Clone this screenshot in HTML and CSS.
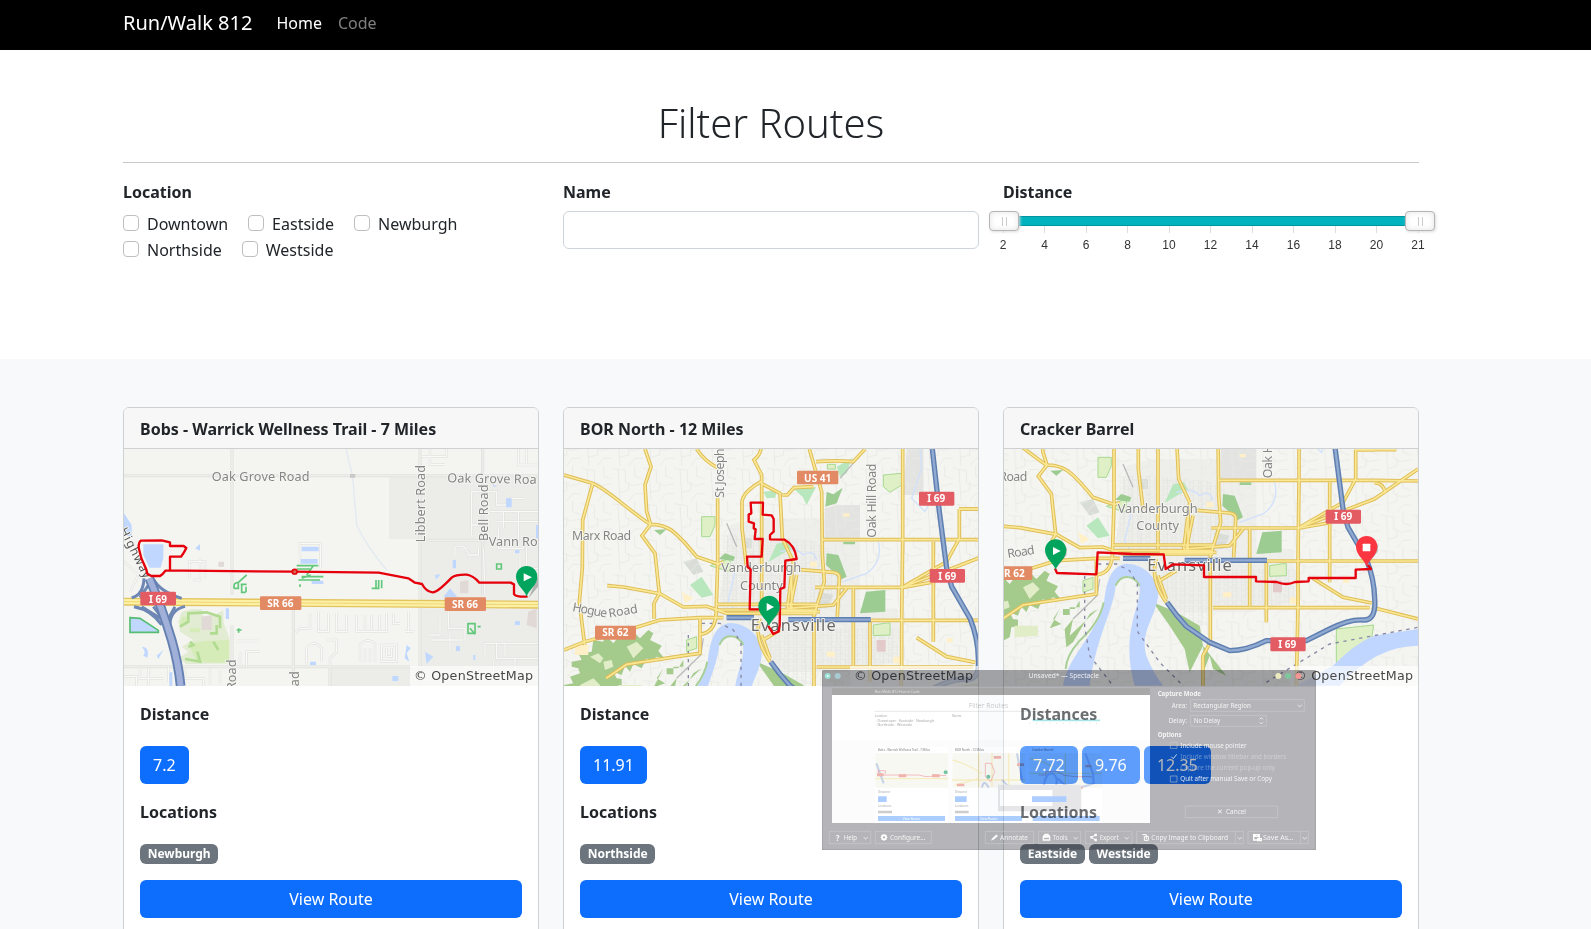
FILE: index.html
```html
<!DOCTYPE html>
<html lang="en">
<head>
<meta charset="utf-8">
<title>Run/Walk 812</title>
<link rel="stylesheet" href="styles.css">
</head>
<body>
<nav class="navbar"><a class="brand">Run/Walk 812</a><a class="nav-link active">Home</a><a class="nav-link">Code</a></nav>

<svg class="defs" width="0" height="0">
  <defs>
    <pattern id="grid" width="26" height="18" patternUnits="userSpaceOnUse"><path d="M0 0H26M0 0V18M13 0V18M0 9H13" stroke="#dcdcd9" stroke-width="1.4" fill="none"/></pattern>
    <pattern id="grid2" width="93" height="106" patternUnits="userSpaceOnUse"><path d="M0 8L40 14V50L62 60L93 54M18 11L24 106M68 0V32L93 40M24 80L50 74V50M50 106L68 84H93" stroke="#e8e8e4" stroke-width="2.5" fill="none"/></pattern>
    <g id="pin"><path d="M0 0C-5-20-32-34-32-60A32 32 0 0 1 32-60C32-34 5-20 0 0Z"/></g>
    <g id="roads">
      <path d="M42 240L125 264C170 280 215 330 300 388C350 388 370 400 440 485L505 507L520 500"/>
      <path d="M128 266L98 375L97 520L88 620L104 750M42 765L105 740L200 715L330 675L450 668L520 668"/>
      <path d="M285 162L303 215L285 270L290 350L302 388L276 422L315 475L328 595L312 625V672"/>
      <path d="M172 572L220 576L330 596L400 636L470 634L530 655H800"/>
      <path d="M503 310V507L498 660C495 700 475 715 450 718"/>
      <path d="M440 162Q465 200 503 218"/>
      <path d="M633 162Q630 180 612 195L635 240V640M633 260Q580 290 576 320V400L590 520M633 265L690 295L697 430L730 500L712 640"/>
      <path d="M697 300H712L732 278L790 275M798 200Q860 195 910 200L945 162"/>
      <path d="M778 162L815 290L817 480L823 560L792 660V872"/>
      <path d="M817 434H1284L1415 436M1058 162V440L1055 675V810L1050 1050"/>
      <path d="M752 524L850 532Q870 535 868 550L862 665M795 577H1060L1155 560M712 640L850 630L890 580"/>
      <path d="M500 628H800M500 645H800M640 650L760 650L810 650"/>
      <path d="M960 676H1415M910 580V812M1150 440V740M960 680V860M1228 342H1284M1228 342V430L1190 500L1060 575L1180 530L1284 490L1415 400"/>
      <path d="M450 670V775L400 782L230 808L168 850M635 720L660 790M800 816H1270M1100 728L1190 785L1276 802M1276 815L1415 850"/>
      <path d="M792 870V920L770 960V1050M630 670Q610 730 660 800M640 735L690 705"/>
      <path d="M1284 442Q1310 440 1317 472M1228 342H1350"/>
      <path d="M725 520V650M740 540L720 640"/>
    </g>
    <g id="mways">
      <path d="M1147 162L1168 350L1190 520L1205 575L1260 670Q1284 730 1285 790Q1290 855 1250 853Q1210 850 1150 880L1080 915H960Q900 945 850 945L790 920L720 872Q690 840 662 800"/>
      <path d="M530 668H612M715 674H962"/>
    </g>
    <g id="city">
      <rect x="20" y="140" width="1420" height="930" fill="#f4f5f0"/>
      <path d="M540 390L620 370H900L930 450V640H1040V800L900 830H680L640 760L500 680Z" fill="#eeeeeb"/>
      <path d="M824 340L860 330H930V430H824ZM1070 162H1120V300H1060Z" fill="#e3e3e1"/>
      <path d="M580 430H605V460H580ZM400 500L440 490L460 530L430 540ZM805 590L850 600L830 640H800Z" fill="#d9ddd8"/>
      <rect x="42" y="140" width="1400" height="930" fill="url(#grid2)"/>
      <path d="M650 700H1060V810H800V870H720L650 790ZM510 420H620L800 440L880 500V640H510Z" fill="url(#grid)"/>
      <g fill="#b9e7bd"><path d="M732 282L798 276L770 330L758 306ZM680 446L712 440L726 462L700 475L655 502ZM420 570L455 545L490 600L455 608ZM640 290L680 286L676 308L650 310ZM860 215L905 190L890 235L870 245Z"/></g>
      <g fill="#dff0c6" stroke="#a7d991" stroke-width="3"><path d="M455 365H495V390L480 425H455ZM1000 240L1055 235V270L1020 292L1000 275ZM1010 684H1020V720L970 722V690ZM480 512L540 490V530ZM1170 880L1282 868L1270 950L1170 980ZM832 208H856V222H832ZM410 735L440 725V760L410 770Z"/></g>
      <g fill="#9dcc93"><path d="M830 475L865 480L890 545L870 555L850 530L828 510ZM506 492L525 475L555 485L550 498ZM948 590L1006 585V650L930 655ZM312 405L350 403L330 420ZM880 440H915V448H880ZM830 290L850 298L878 278L860 325L826 335Z"/></g>
      <path d="M65 800L95 795L85 775L125 770L130 735L160 740L165 720L190 745L210 720L235 730L255 715L270 730L295 705L310 715L300 735L335 752L325 768L345 792L320 785L300 800L290 790L275 820L250 808L240 830L225 812L215 840L190 830L200 850L215 852V872L195 875L190 905L160 920L150 960L130 965V1050H42V870L70 865L60 845L90 835L85 820L65 815ZM340 820L320 850L345 865L310 878L325 850ZM400 795V815H370V838H350V820H385ZM620 800L690 830L760 870L770 930L730 1010L715 940L670 870ZM770 930L840 1020L800 1000L790 960L775 1000ZM455 820L430 835L380 920L360 935L355 880L380 850L370 900Z" fill="#a4ca8c"/>
      <path d="M120 785L145 775L160 790L150 805ZM230 755L260 740L280 760L250 790ZM90 870L130 850L150 870L145 900L110 910ZM205 870H275V900L205 905ZM160 800L185 795L190 815L165 825Z" fill="#e0edc6"/>
      <path d="M350 1050C365 960 455 890 473 800C480 745 490 690 540 684C590 684 640 725 635 785C625 850 580 890 600 960Q620 1010 650 1050H565C540 960 545 890 575 800C590 740 570 723 545 723Q520 720 508 750C500 830 450 900 430 1050ZM1160 990Q1230 920 1284 900L1415 880V930Q1290 930 1180 1050H1050Z" fill="#c0d6ff"/>
      <path d="M508 750Q520 722 545 724Q566 725 580 750M472 800Q460 860 400 915Q360 960 358 1000" fill="none" stroke="#a7cf97" stroke-width="6"/>
      <g fill="none" stroke="#d2e1fb" stroke-width="4"><path d="M1110 162L1115 220L1085 310L1125 350L1140 320M985 440Q1000 500 950 535L880 560M690 470Q740 455 760 480Q790 460 800 495M555 530L535 615L560 660"/></g>
      <path d="M415 720V872L430 960L500 1050M455 685H510L550 705L573 745V872L575 890L640 980L720 1060M960 1040L1150 925L1415 875" fill="none" stroke="#8688a4" stroke-width="4" stroke-dasharray="10 14"/>
      <path d="M530 385L560 455M460 730L452 780L380 850M940 170L870 250" fill="none" stroke="#b9b9b9" stroke-width="4"/>
      <g fill="#fff0c8"><path d="M75 750H115V780H75ZM395 590L430 610L405 625ZM780 500H800V515H780ZM830 770H855V785H830ZM1030 785H1050V805H1030ZM1190 730H1208V742H1190ZM880 355H898V365H880Z"/></g>
      <path d="M980 735H1007V770H980Z" fill="#e3caca"/>
      <use href="#roads" class="road-edge"/><use href="#roads" class="road"/>
      <use href="#mways" class="mway-edge"/><use href="#mways" class="mway"/>
      <g class="place" text-anchor="middle"><text x="634" y="531" font-size="40" textLength="240" lengthAdjust="spacingAndGlyphs">Vanderburgh</text><text x="634" y="584" font-size="40" textLength="128" lengthAdjust="spacingAndGlyphs">County</text></g>
    </g>
  </defs>
</svg>

<section class="filters">
  <h1>Filter Routes</h1>
  <hr>
  <div class="columns">
    <div>
      <div class="label">Location</div>
      <div class="checks">
        <label><i></i>Downtown</label><label><i></i>Eastside</label><label><i></i>Newburgh</label>
        <label><i></i>Northside</label><label><i></i>Westside</label>
      </div>
    </div>
    <div><div class="label">Name</div><input class="name" type="text"></div>
    <div>
      <div class="label">Distance</div>
      <div class="slider"><span class="handle"><b></b><b></b></span><span class="bar"></span><span class="handle"><b></b><b></b></span></div>
      <div class="ticks"><span>2</span><span>4</span><span>6</span><span>8</span><span>10</span><span>12</span><span>14</span><span>16</span><span>18</span><span>20</span><span>21</span></div>
    </div>
  </div>
</section>

<main class="routes columns">
  <article class="card">
    <header>Bobs - Warrick Wellness Trail - 7 Miles</header>
    <svg class="map" viewBox="42 162 1242 711" preserveAspectRatio="none">
      <rect x="42" y="162" width="1242" height="711" fill="#f4f5f0"/>
      <path d="M837 243H1284V620H930V432H837ZM930 640H1284V873H660V815H930Z" fill="#ecece9"/>
      <g fill="none" stroke="#dededb" stroke-width="9"><path d="M42 242H1284M366 162V600M930 162V873M1118 162V600M930 436H1130M550 640V873M42 815H900M366 690V873M660 815V873"/></g>
      <g fill="none" stroke="#ededea" stroke-width="5"><path d="M42 242H1284M366 162V600M930 162V873M1118 162V600M930 436H1130M550 640V873M42 815H900M366 690V873M660 815V873"/></g>
      <path class="lane-edge" d="M935 185H1010V162M960 162V208H1005M1225 162V210H1284M1250 162V210M1085 420V290H1160V330H1200V310H1240M1140 350H1284M1160 380H1284M1165 400V460H1240V420M1225 350V440M1180 350V400M1230 480V520H1284M1250 455V540M1035 480V455Q1070 445 1075 480H1105V455M1085 390H1110M570 510V445H632V520M238 550V500H285V550M250 555H270V490M600 655V700H570L555 715M625 650V710H655V655M680 655V710H710V660M740 660V710H830V655M765 660V705M785 660V705M808 660V705M850 655V685H870M895 650V710M910 710H885M990 650V720H960M1015 650V700H1065V740M965 735H1060M1020 710V770M1130 745H1284M1125 790V745H1160V790H1284M1185 745V785M1215 790V850M1150 800V850M590 810V760Q610 730 635 760V800M650 735H680V770L660 790V810M750 800V750Q770 725 795 745V800M765 800V760M780 800V760M815 750H860V800H815ZM830 760V785H845V760M380 738H445M390 770V810M410 815V770H450M42 845H80V873M90 815V850H160M115 820V873M175 815V860M200 820V873M225 820V850H280V873M300 820V870M330 825V865M1120 460L1125 600M42 500L85 540L60 590"/>
      <path class="lane-core" d="M935 185H1010V162M960 162V208H1005M1225 162V210H1284M1250 162V210M1085 420V290H1160V330H1200V310H1240M1140 350H1284M1160 380H1284M1165 400V460H1240V420M1225 350V440M1180 350V400M1230 480V520H1284M1250 455V540M1035 480V455Q1070 445 1075 480H1105V455M1085 390H1110M570 510V445H632V520M238 550V500H285V550M250 555H270V490M600 655V700H570L555 715M625 650V710H655V655M680 655V710H710V660M740 660V710H830V655M765 660V705M785 660V705M808 660V705M850 655V685H870M895 650V710M910 710H885M990 650V720H960M1015 650V700H1065V740M965 735H1060M1020 710V770M1130 745H1284M1125 790V745H1160V790H1284M1185 745V785M1215 790V850M1150 800V850M590 810V760Q610 730 635 760V800M650 735H680V770L660 790V810M750 800V750Q770 725 795 745V800M765 800V760M780 800V760M815 750H860V800H815ZM830 760V785H845V760M380 738H445M390 770V810M410 815V770H450M42 845H80V873M90 815V850H160M115 820V873M175 815V860M200 820V873M225 820V850H280V873M300 820V870M330 825V865M1120 460L1125 600M42 500L85 540L60 590"/>
      <path d="M708 162L728 245L740 390Q770 455 830 525" fill="none" stroke="#e2e9f2" stroke-width="4"/>
      <path d="M720 237H736V248H720Z" fill="#c9c9c6"/>
      <g fill="#c0d8ff"><path d="M42 355L65 390V425L42 420ZM100 448H160V490L152 518H118L100 480ZM575 455H626V469H575ZM572 492H623V506H572ZM605 557H640V567H605ZM255 460L270 447V467ZM1188 310H1205V337H1188ZM1028 495H1038V520H1028ZM975 540L992 538L978 554ZM1000 606L1020 580L1042 606ZM945 770L970 785L950 806ZM95 755Q120 755 112 788L100 782Q110 770 95 755ZM140 782L160 765L145 792ZM890 750L902 760L890 775L898 800L884 790ZM847 843H865V858H847ZM600 800H618V810H600ZM178 832H187V873H178ZM1215 678H1230V690H1215ZM1038 753H1050V768H1038ZM1148 268L1162 275L1150 275ZM1278 390H1284V430H1278ZM347 640H357V672H347ZM1090 780H1096V795H1090ZM1215 465H1228V475H1215Z"/></g>
      <path d="M60 668L90 670L145 706V712H60Z" fill="#c0d8ff" stroke="#55bd72" stroke-width="5"/>
      <path d="M205 680L215 650L245 642H275L280 665L315 660L340 645V680L358 730V805L230 808L205 790L235 770L215 755L250 735L210 710Z" fill="#e2ecd2"/>
      <path d="M235 745L290 738L358 735V805L260 800ZM210 690L235 680V665L215 665ZM240 700H270V712H240Z" fill="#d5ecb8"/>
      <path d="M210 695L235 680L235 655L290 652L330 665V700M235 755L250 750L240 740M310 740L325 765M225 792L270 800L262 770M320 690V715H300" fill="none" stroke="#b0db91" stroke-width="8"/>
      <path d="M275 665L305 660V705H275ZM1050 560L1075 555V595H1050ZM325 500H342V515H325ZM1255 650L1280 640V700L1250 690Z" fill="#e0d9d6"/>
      <g fill="none" stroke="#61c77a" stroke-width="5"><path d="M560 512H625M560 522H600M575 545H640M565 555H630M590 540L610 512M575 550L602 540M570 568V576M372 580Q370 562 385 562L410 540M385 565V580H372M392 568H410M395 568V592H407M408 575V592M788 580H806V555M798 555V580M815 555V580M785 580H795M1074 686H1095V715H1074ZM1080 700L1095 718M1160 507H1174V522H1160ZM380 705H395M386 700V713M1103 695H1112"/></g>
      <path d="M42 620L1284 629" stroke="#e4c45d" stroke-width="24"/><path d="M42 620L1284 629" stroke="#fcf0a5" stroke-width="16"/><path d="M42 620L1284 629" stroke="#efd676" stroke-width="3"/>
      <g fill="none" stroke="#6e87b5" stroke-width="9"><path d="M65 608Q100 600 102 550M130 552Q150 590 215 610M72 635Q125 645 155 690M225 634Q180 645 180 690M90 608L122 560L150 605M130 635L165 680M95 635L160 675M195 635L170 680"/></g>
      <path d="M118 550Q155 635 185 735Q205 805 212 873" fill="none" stroke="#6480b2" stroke-width="29"/><path d="M118 550Q155 635 185 735Q205 805 212 873" fill="none" stroke="#a0b0d8" stroke-width="18"/>
      <g class="maptext" font-size="38"><text x="305" y="258" textLength="294">Oak Grove Road</text><text x="1012" y="262" textLength="268" transform="rotate(1 1012 262)">Oak Grove Roa</text><text x="1136" y="454" textLength="147">Vann Ro</text><text transform="translate(945 442)rotate(-90)" textLength="232">Libbert Road</text><text transform="translate(1133 438)rotate(-90)" textLength="170">Bell Road</text><text transform="translate(378 885)rotate(-90)">Road</text><text transform="translate(566 920)rotate(-90)">Road</text><text transform="translate(28 405)rotate(63)" textLength="165" class="hwy">Highway</text></g>
      <g class="shield"><rect x="91" y="590" width="107" height="41" rx="4" fill="#e35b63"/><rect x="450" y="604" width="124" height="41" rx="4" fill="#e28a63"/><rect x="1004" y="607" width="124" height="41" rx="4" fill="#e28a63"/><text x="144" y="623">I 69</text><text x="511" y="636">SR 66</text><text x="1065" y="639">SR 66</text></g>
      <path class="trail" d="M180 527V485H213Q223 472 229 459L221 453H180V442L155 436L93 437Q86 440 86 458L94 490L108 521L112 536L124 543H150L158 537L166 527H220L550 530L806 533L895 550L915 563L936 567Q948 590 968 592Q982 593 1025 548Q1038 538 1070 539Q1090 542 1108 563H1202L1212 568V597Q1216 606 1250 605"/><circle cx="554" cy="530" r="7" fill="#d36b5b" stroke="#e5000c" stroke-width="5"/>
      <path d="M1255 610L1284 575V545Z" fill="#777" opacity=".5"/><use href="#pin" x="1250" y="605" fill="#00a45c"/><path d="M1241 535L1266 547L1241 559Z" fill="#fff"/>
      <rect x="900" y="813" width="384" height="60" fill="#fff" opacity=".65"/><text class="osm" x="912" y="855" textLength="357">© OpenStreetMap</text>
    </svg>
    <div class="body"><strong>Distance</strong><p class="nums"><a class="btn">7.2</a></p><strong>Locations</strong><p class="tags"><span>Newburgh</span></p><a class="btn wide">View Route</a></div>
  </article>

  <article class="card">
    <header>BOR North - 12 Miles</header>
    <svg class="map" viewBox="42 162 1242 711" preserveAspectRatio="none">
      <use href="#city"/>
      <g class="maptext" font-size="37"><text x="66" y="435" textLength="177">Marx Road</text><text transform="translate(523 308)rotate(-90)" textLength="148">St Joseph</text><text transform="translate(977 428)rotate(-90)" textLength="222">Oak Hill Road</text><text transform="translate(66 648)rotate(11)" textLength="105">Hogue</text><text transform="translate(178 668)rotate(-10)" textLength="88">Road</text></g>
      <text class="big" x="602" y="707" textLength="255">Evansville</text>
      <g class="shield"><rect x="741" y="227" width="124" height="41" rx="4" fill="#e28a63"/><rect x="135" y="692" width="123" height="42" rx="4" fill="#e28a63"/><rect x="1107" y="290" width="106" height="42" rx="4" fill="#e35b63"/><rect x="1139" y="522" width="106" height="41" rx="4" fill="#e35b63"/><text x="803" y="260">US 41</text><text x="196" y="724">SR 62</text><text x="1159" y="322">I 69</text><text x="1192" y="554">I 69</text></g>
      <path class="trail" d="M655 643H599L602 523L593 516L591 485H635L638 432H614L617 403L611 400L612 385L596 380V359L604 355L602 323H639L638 359L665 361L671 372V410L660 420V433L704 434Q735 450 740 492L706 497L703 577L691 582L689 690L686 709L670 717L656 695"/>
      <path d="M658 690L690 650L692 625Z" fill="#777" opacity=".5"/><use href="#pin" x="657" y="694" fill="#00a45c"/><path d="M650 624L672 636L650 648Z" fill="#fff"/>
      <rect x="900" y="813" width="384" height="60" fill="#fff" opacity=".65"/><text class="osm" x="912" y="855" textLength="357">© OpenStreetMap</text>
    </svg>
    <div class="body"><strong>Distance</strong><p class="nums"><a class="btn">11.91</a></p><strong>Locations</strong><p class="tags"><span>Northside</span></p><a class="btn wide">View Route</a></div>
  </article>

  <article class="card">
    <header>Cracker Barrel</header>
    <svg class="map" viewBox="42 162 1242 711" preserveAspectRatio="none">
      <use href="#city" x="-131" y="-178"/>
      <g class="maptext" font-size="37"><text x="28" y="258" textLength="84">Road</text><text transform="translate(847 250)rotate(-90)" textLength="222">Oak Hill Road</text><text transform="translate(54 489)rotate(-9)" textLength="82">Road</text></g>
      <text class="big" x="472" y="529" textLength="253">Evansville</text>
      <g class="shield"><rect x="4" y="514" width="123" height="41" rx="4" fill="#e28a63"/><rect x="1007" y="344" width="106" height="42" rx="4" fill="#e35b63"/><rect x="841" y="727" width="106" height="42" rx="4" fill="#e35b63"/><text x="65" y="546">SR 62</text><text x="1060" y="376">I 69</text><text x="892" y="759">I 69</text></g>
      <path class="trail" d="M196 523L201 534L319 538L323 472L425 477L521 478L527 522L549 508L642 511V546H798V559L860 561Q890 573 915 561L956 559V549H1097V524L1143 522L1135 512"/>
      <path d="M197 521L229 481L231 456ZM1131 510L1163 470L1165 445Z" fill="#777" opacity=".5"/><use href="#pin" x="197" y="525" fill="#00a45c"/><path d="M189 456L212 468L189 480Z" fill="#fff"/><use href="#pin" x="1130" y="515" fill="#fb3640"/><rect x="1118" y="446" width="23" height="23" rx="2" fill="#fff"/>
      <rect x="900" y="813" width="384" height="60" fill="#fff" opacity=".65"/><text class="osm" x="912" y="855" textLength="357">© OpenStreetMap</text>
    </svg>
    <div class="body"><strong>Distances</strong><p class="nums"><a class="btn">7.72</a><a class="btn">9.76</a><a class="btn">12.35</a></p><strong>Locations</strong><p class="tags"><span>Eastside</span><span>Westside</span></p><a class="btn wide">View Route</a></div>
  </article>
</main>

<svg class="ghost" viewBox="0 0 1482 540">
  <path fill="#191924" fill-opacity=".32" fill-rule="evenodd" d="M5 0H1477Q1482 0 1482 5V540H0V5Q0 0 5 0ZM30 54V459H984V54Z"/>
  <path d="M0 50V5Q0 0 5 0H1477Q1482 0 1482 5V50Z" fill="#222" opacity=".1"/>
  <rect x="30" y="54" width="954" height="405" fill="#fff" opacity=".34"/>
  <rect x="30" y="54" width="954" height="21" fill="#000" opacity=".34"/>
  <path d="M0 539H1482M1480 0V540M1 0V540" stroke="#777" stroke-width="2" opacity=".4"/>
  <circle cx="17" cy="18" r="9" fill="#9de0d5"/><circle cx="17" cy="18" r="3" fill="#e5ffff"/><circle cx="47" cy="18" r="9" fill="#a7cbd0"/>
  <circle cx="1369" cy="18" r="9" fill="#eeeac0"/><circle cx="1398" cy="18" r="9" fill="#7fc69c"/><circle cx="1429" cy="18" r="9" fill="#f49694"/>
  <text x="158" y="68" font-size="12" fill="#ddd" textLength="135">Run/Walk 812 Home Code</text>
  <g class="mini-page">
    <rect x="30" y="210" width="954" height="249" fill="#fcfcfd"/>
    <path d="M160 232H378V459H160ZM391 232H609V459H391ZM622 232H840V459H622Z" fill="#fff"/>
    <text x="440" y="115" font-size="24" fill="#bbb" font-weight="300" textLength="119" lengthAdjust="spacingAndGlyphs">Filter Routes</text>
    <path d="M158 124H730" stroke="#ddd" stroke-width="2"/>
    <text x="158" y="142" font-size="10" textLength="37">Location</text><text x="390" y="142" font-size="10">Name</text>
    <text x="160" y="155" font-size="11" textLength="176">▫ Downtown ▫ Eastside ▫ Newburgh</text><text x="160" y="167" font-size="11" textLength="110">▫ Northside ▫ Westside</text>
    <text x="168" y="244" font-size="11" font-weight="bold" textLength="156" lengthAdjust="spacingAndGlyphs">Bobs - Warrick Wellness Trail - 7 Miles</text><text x="399" y="244" font-size="11" font-weight="bold" textLength="87" lengthAdjust="spacingAndGlyphs">BOR North - 12 Miles</text><text x="630" y="244" font-size="11" font-weight="bold" textLength="64" lengthAdjust="spacingAndGlyphs">Cracker Barrel</text>
    <text x="168" y="368" font-size="9">Distance</text><text x="399" y="368" font-size="9">Distance</text><text x="168" y="411" font-size="9">Locations</text><text x="399" y="411" font-size="9">Locations</text>
    <path d="M160 250H378V353H160ZM391 250H609V353H391ZM622 250H840V353H622Z" fill="#f8f8f3"/>
    <path d="M160 326H378M392 270Q430 280 480 310M470 250V350M510 250V350M560 250V350M390 330H610M400 345Q440 335 470 325M622 310H840M730 250V350M622 265Q660 270 690 290" fill="none" stroke="#f6edc3" stroke-width="4"/>
    <path d="M163 280L185 340M585 250L600 330M480 353Q485 325 500 353M540 330L560 350M665 350Q670 310 690 310Q712 320 700 352M708 325Q740 370 815 340L813 310L790 250" fill="none" stroke="#c6d2e6" stroke-width="6"/>
    <path d="M190 312V302H168L170 315H290Q325 325 335 315L372 317M490 320V280H508L518 305L506 335ZM650 315H672V305H708L726 316L760 320H810" fill="none" stroke="#f2a0a6" stroke-width="2"/>
    <path d="M230 313H253V322H230ZM330 313H353V322H330ZM165 310H185V319H165ZM515 258H537V266H515ZM585 280H606V288H585ZM405 341H427V349H405ZM790 285H808V292H790ZM760 350H782V357H760Z" fill="#f0b4ad"/>
    <circle cx="371" cy="307" r="6" fill="#73c5a5"/><circle cx="499" cy="320" r="6" fill="#73c5a5"/>
    <path d="M168 379H194V396H168ZM399 379H434V396H399ZM630 379H733V396H630ZM168 438H369V453H168ZM399 438H600V453H399ZM632 438H833V453H632Z" fill="#abcdff"/>
    <path d="M168 422H210V430H168ZM399 422H440V430H399Z" fill="#ccc"/>
    <path d="M528 344H778V424H528Z" fill="#e6e6e8"/><path d="M534 360H691V408H534Z" fill="#fff"/><path d="M630 379H733V396H630Z" fill="#abcdff"/>
    <path d="M632 151H834" stroke="#aae5e6" stroke-width="5"/><path d="M622 160H840" stroke="#ccc" stroke-width="2" stroke-dasharray="3 17"/>
  </g>
  <g font-size="10" fill="#fff" text-anchor="middle"><text x="268" y="449">View Route</text><text x="500" y="449">View Route</text></g>
  <g class="ghost-text">
    <text x="620" y="24" textLength="211" lengthAdjust="spacingAndGlyphs">Unsaved* — Spectacle</text>
    <text x="1007" y="77" font-weight="bold" textLength="130" lengthAdjust="spacingAndGlyphs">Capture Mode</text><text x="1049" y="115" textLength="46" lengthAdjust="spacingAndGlyphs">Area:</text><text x="1114" y="115" textLength="173" lengthAdjust="spacingAndGlyphs">Rectangular Region</text><text x="1040" y="160" textLength="55" lengthAdjust="spacingAndGlyphs">Delay:</text><text x="1115" y="160" textLength="80" lengthAdjust="spacingAndGlyphs">No Delay</text><text x="1007" y="202" font-weight="bold" textLength="72" lengthAdjust="spacingAndGlyphs">Options</text>
    <text x="1075" y="233" textLength="199" lengthAdjust="spacingAndGlyphs">Include mouse pointer</text><text x="1075" y="267" opacity=".4" textLength="318" lengthAdjust="spacingAndGlyphs">Include window titlebar and borders</text><text x="1075" y="301" opacity=".4" textLength="284" lengthAdjust="spacingAndGlyphs">Capture the current pop-up only</text><text x="1075" y="334" textLength="275" lengthAdjust="spacingAndGlyphs">Quit after manual Save or Copy</text>
    <text x="1186" y="433">✕</text><text x="1212" y="433" textLength="60" lengthAdjust="spacingAndGlyphs">Cancel</text>
    <text x="41" y="512" font-weight="bold" font-size="24">?</text><text x="65" y="511" textLength="40" lengthAdjust="spacingAndGlyphs">Help</text><text x="204" y="511" textLength="106" lengthAdjust="spacingAndGlyphs">Configure…</text><text x="534" y="511" textLength="84" lengthAdjust="spacingAndGlyphs">Annotate</text><text x="692" y="511" textLength="45" lengthAdjust="spacingAndGlyphs">Tools</text><text x="833" y="511" textLength="57" lengthAdjust="spacingAndGlyphs">Export</text><text x="988" y="511" textLength="230" lengthAdjust="spacingAndGlyphs">Copy Image to Clipboard</text><text x="1323" y="511" textLength="92" lengthAdjust="spacingAndGlyphs">Save As…</text>
  </g>
  <g class="ghost-line"><path d="M22 484H146V521H22ZM160 484H328V521H160ZM490 484H635V521H490ZM650 484H776V521H650ZM790 484H930V521H790ZM944 484H1264V521H944ZM1240 484V521M1278 484H1459V521H1278ZM1435 484V521M1106 89H1447V124H1106ZM1106 136H1333V169H1106ZM1090 408H1367V443H1090ZM1045 217H1065V235H1045ZM1045 318H1065V336H1045Z"/>
    <path class="sign" d="M125 502L131 507L137 502M755 502L761 507L767 502M908 502L914 507L920 502M1247 502L1253 507L1259 502M1442 502L1448 507L1454 502M1427 105L1433 110L1439 105M1313 148L1318 143L1323 148M1313 157L1318 162L1323 157M1048 260L1054 266L1064 253"/></g>
  <g fill="none" stroke="#fff"><circle cx="186" cy="502" r="6" stroke-width="5"/><path d="M186 492V496M186 508V512M176 502H180M192 502H196M179 495L182 498M190 506L193 509M179 509L182 506M190 498L193 495" stroke-width="4"/><path d="M508 511L512 504L523 494L527 498L516 508Z" fill="#fff"/><path d="M664 501H683V510H664ZM663 498H684M669 497V493H678V497" stroke-width="4"/><path d="M821 495L808 502L821 510" stroke-width="3"/><path d="M820 494H822V496H820ZM807 501H809V503H807ZM820 509H822V511H820Z" stroke-width="5"/><path d="M961 494H973V507M967 499H979V511H967Z" stroke-width="3"/><path d="M1295 494H1312V510H1295ZM1299 494V499H1308V494M1307 506H1318V512H1307Z" stroke-width="4"/></g>
</svg>
</body>
</html>
```

FILE: styles.css
```css
* { box-sizing: border-box; }
body { margin: 0; width: 1591px; height: 929px; overflow: hidden; position: relative; background: #fff; color: #212529; font: 16px/24px "Noto Sans", "Open Sans", sans-serif; }
.defs { position: absolute; }
.navbar { height: 50px; background: #000; padding: 0 0 4px 123px; display: flex; align-items: center; }
.brand { color: #fff; font-size: 20px; margin-right: 24px; }
.nav-link { color: #808080; margin-right: 16px; }
.nav-link.active { color: #fff; }
.filters { height: 309px; padding: 49px 172px 0 123px; }
h1 { margin: 0; font-size: 40px; line-height: 48px; font-weight: 300; text-align: center; }
hr { margin: 15px 0 17px; border: 0; border-top: 1px solid #c7c8c9; }
.columns { display: grid; grid-template-columns: repeat(3, 416px); gap: 24px; }
.label { font-weight: 700; margin-bottom: 7px; }
.checks { display: flex; flex-wrap: wrap; width: 380px; column-gap: 20px; row-gap: 2px; padding-top: 1px; }
.checks label { display: flex; gap: 8px; }
.checks i { width: 16px; height: 16px; border: 1px solid #bfbfbf; border-radius: 4px; margin-top: 3px; }
.name { display: block; width: 416px; height: 38px; border: 1px solid #ced4da; border-radius: 6px; }
.slider { display: flex; align-items: center; margin: 0 -16px 0 -14px; height: 20px; }
.bar { flex: 1; height: 10px; background: #00b3bf; border-top: 1px solid #00949e; border-bottom: 1px solid #00949e; }
.handle { width: 30px; height: 20px; border: 1px solid #b5b5b5; border-radius: 4px; background: #fff; box-shadow: inset 0 0 6px #e4e4e4, 1px 1px 3px #ddd; display: flex; align-items: center; justify-content: center; gap: 3px; position: relative; z-index: 1; }
.handle b { width: 1px; height: 9px; background: #ccc; }
.ticks { display: flex; justify-content: space-between; margin: -5px 1px 0 0; font: 12px/14px "Liberation Sans", Arial, sans-serif; color: #333; }
.ticks span { width: 0; display: flex; flex-direction: column; align-items: center; }
.ticks span::before { content: ""; width: 1px; height: 7px; background: #ddd; margin-bottom: 5px; flex: none; }
.routes { background: #f8f9fa; height: 570px; padding: 48px 0 0 123px; overflow: hidden; }
.card { height: 550px; border: 1px solid #cfd0d1; border-radius: 6px; background: #fff; overflow: hidden; }
.card header { height: 41px; padding: 9px 16px 0; background: #f7f7f7; border-bottom: 1px solid #cfd0d1; font-weight: 700; }
.map { display: block; width: 414px; height: 237px; }
.body { padding: 16px; }
.body strong { display: block; }
.nums { margin: 20px 0 16px; display: flex; gap: 4.2px; }
.btn { background: #0d6efd; color: #fff; height: 38px; padding: 7px 13px; border-radius: 6px; }
.wide { display: block; text-align: center; }
.tags { margin: 20px 0 16px; display: flex; gap: 4px; }
.tags span { background: #6c757d; color: #fff; font-size: 12px; line-height: 20px; height: 20px; padding: 0 7.7px; border-radius: 6px; font-weight: 700; }
.lane-edge { fill: none; stroke: #dcdcd9; stroke-width: 7px; }
.lane-core { fill: none; stroke: #f9f9f7; stroke-width: 4px; }
.road-edge { fill: none; stroke: #dfbd58; stroke-width: 11px; }
.road { fill: none; stroke: #fae894; stroke-width: 5px; }
.mway-edge { fill: none; stroke: #5f7fb0; stroke-width: 16px; }
.mway { fill: none; stroke: #91aad2; stroke-width: 7px; }
.trail { fill: none; stroke: #e5000c; stroke-width: 7px; stroke-linejoin: round; stroke-linecap: round; }
.maptext, .place, .big { fill: #858585; stroke: #f6f6f2; stroke-width: 5px; paint-order: stroke; }
.hwy { fill: #555; font-size: 36px; }
.big { fill: #686868; font-size: 49px; }
.shield { fill: #fff; font-size: 30px; font-weight: 700; text-anchor: middle; }
.osm { fill: #484848; font: 38px "DejaVu Sans", sans-serif; }
.ghost { position: absolute; left: 822px; top: 670px; width: 494px; height: 180px; }
.mini-page { fill: #aaa; mix-blend-mode: multiply; }
.ghost-text { fill: #fff; fill-opacity: .85; font-size: 20px; }
.ghost-line { fill: none; stroke: #d0d0d4; stroke-width: 2px; opacity: .75; }
.sign { stroke: #fff; stroke-width: 3px; }
```
